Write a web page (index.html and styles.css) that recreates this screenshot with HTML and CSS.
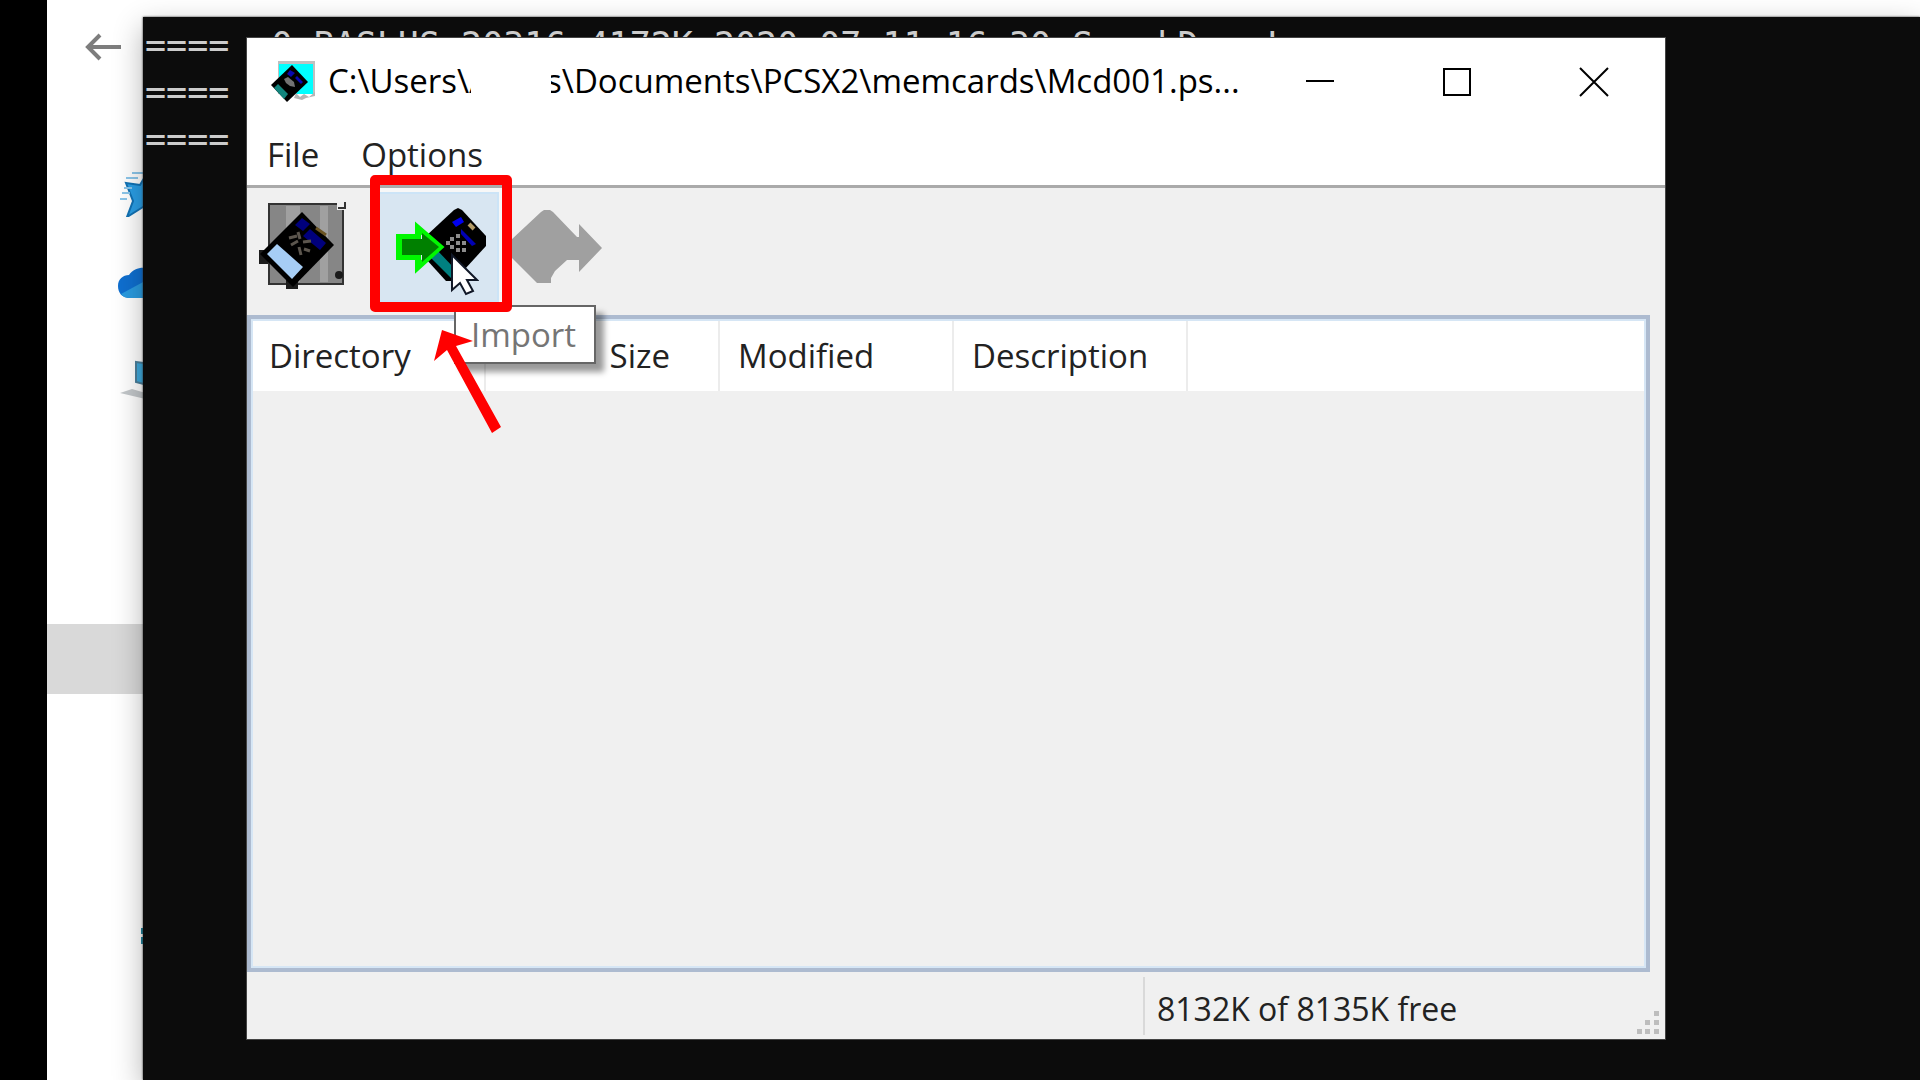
FILE: index.html
```
<!DOCTYPE html>
<html lang="en">
<head>
  <meta charset="UTF-8" />
  <meta name="viewport" content="width=device-width, initial-scale=1.0" />
  <title>Mcd001.ps2</title>
  <link rel="stylesheet" href="styles.css">
</head>
<body>
  <div class="explorer">
    <button type="button" class="back" aria-label="Back">
      <svg width="36" height="28" viewBox="0 0 36 28"><path d="M36 14H3M15 2L3 14l12 12" fill="none" stroke="#7d7d7d" stroke-width="4"/></svg>
    </button>
    <nav class="places">
      <a href="#" class="place" aria-label="Quick access">
        <svg width="48" height="48" viewBox="0 0 48 48">
          <path d="M8 14l14 2 6-10 5 12 13 2-10 9 3 14-14-5-16 10 6-16z" fill="#2b9fe6" stroke="#1272b4" stroke-width="2"/>
          <path d="M14 4h14M8 9h12M4 24h8M6 19h8M2 30h7" stroke="#8cc6ea" stroke-width="2"/>
        </svg>
      </a>
      <a href="#" class="place" aria-label="OneDrive">
        <svg width="52" height="32" viewBox="0 0 52 32">
          <path d="M12 31C4 31 0 26 0 19c0-7 5-11 11-11C15 2 22 0 28 1c9 1 12 8 13 12 7 0 11 5 11 9 0 6-4 9-9 9z" fill="#0f6fd0"/>
          <path d="M3 27L27 14l22 14c-1 2-4 3-6 3H12c-4 0-7-1-9-4z" fill="#2a9be0"/>
        </svg>
      </a>
      <a href="#" class="place" aria-label="This PC">
        <svg width="50" height="56" viewBox="0 0 50 56">
          <path d="M18 17l30 4v24l-30-8z" fill="#3fa9dc" stroke="#4c7f9a" stroke-width="2"/>
          <path d="M2 48l12-4 34 10-12 2z" fill="#c3c7ca"/>
        </svg>
      </a>
      <a href="#" class="place place-selected" aria-label="Selected folder"></a>
      <a href="#" class="place place-last" aria-label="Network">
        <svg width="24" height="16" viewBox="0 0 24 16"><path d="M0 0h24v6H0zM0 9h24v7H0z" fill="#1f87a3"/></svg>
      </a>
    </nav>
  </div>

  <pre class="console">====  0 BASLUS-20316 4172K 2020-07-11 16:30 SmackDown!
====
====</pre>

  <main class="window">
    <header class="titlebar">
      <svg class="app-icon" width="46" height="42" viewBox="0 0 46 42">
        <path d="M8 0h37v33H8z" fill="#c0c0c0"/>
        <path d="M9 3h34v30H9z" fill="#00ffff"/>
        <path d="M26 32l4 4 4-3 5 3 6-5v4l-9 2-4 2-8-2z" fill="#b5b5b5"/>
        <path d="M22 4l16 17-21 20L1 24z" fill="#000"/>
        <path d="M8 23l10 10-4 5L4 27z" fill="#12857d"/>
        <path d="M20 9l5 3-4 4-4-3zM27 15l6 6-2 2-6-6z" fill="#0808b0"/>
        <path d="M14 18l4-2 6 5 1 5-5-1-4-3z" fill="#727272"/>
      </svg>
      <h1 class="title">C:\Users\A<span class="redacted"></span>s\Documents\PCSX2\memcards\Mcd001.ps...</h1>
      <div class="window-buttons">
        <button type="button" aria-label="Minimize">
          <svg width="30" height="30" viewBox="0 0 30 30"><path d="M1 14h28" stroke="#000" stroke-width="2"/></svg>
        </button>
        <button type="button" aria-label="Maximize">
          <svg width="30" height="30" viewBox="0 0 30 30"><path d="M2 2h26v26H2z" fill="none" stroke="#000" stroke-width="2"/></svg>
        </button>
        <button type="button" aria-label="Close">
          <svg width="30" height="30" viewBox="0 0 30 30"><path d="M1 1l28 28M29 1L1 29" stroke="#000" stroke-width="2"/></svg>
        </button>
      </div>
    </header>

    <nav class="menubar">
      <button type="button">File</button>
      <button type="button">Options</button>
    </nav>

    <div class="toolbar">
      <button type="button" class="tool" aria-label="Open memory card">
        <svg width="90" height="90" viewBox="0 0 90 90">
          <path d="M12 2h74v80H12z" fill="#868686" stroke="#333" stroke-width="2"/>
          <path d="M29 4h14v76H29zM63 4h8v76h-8z" fill="#a0a0a0"/>
          <path d="M80 0h10v8H80z" fill="#efefef"/>
          <path d="M88 0v6h-7" fill="none" stroke="#333" stroke-width="2"/>
          <circle cx="82" cy="73" r="4" fill="#1a1a1a"/>
          <path d="M2 48h9v14H2zM29 74h12v13H29z" fill="#1c1c1c"/>
          <path d="M45 10l32 33-41 42L3 52z" fill="#000"/>
          <path d="M20 42l26 23-11 12-25-25z" fill="#a6cdf5"/>
          <path d="M45 16l8 6-7 7-8-6zM53 27l16 14-6 7-17-14z" fill="#00007c"/>
          <path d="M59 26l10 7" stroke="#6b5423" stroke-width="3"/>
          <path d="M32 36l8-2M41 30l2 7M46 40l8-1M34 43l7-4M42 45l2 8M47 47l6 2" stroke="#5c564e" stroke-width="3"/>
        </svg>
      </button>
      <button type="button" class="tool tool-active" aria-label="Import" aria-describedby="import-tip">
        <svg width="100" height="80" viewBox="0 0 100 80">
          <path d="M66 3l4-2 4 2 24 26v10L66 74h-8L38 52V29z" fill="#000"/>
          <path d="M48 42l19 20v9l-3 1-15-15-6-6z" fill="#008080"/>
          <path d="M64 15l9-5 3 5-8 5z" fill="#0000f0"/>
          <path d="M73 22l15 15-4 2-11-12z" fill="#0000b4"/>
          <path d="M81 17l5 5" stroke="#b29a66" stroke-width="4"/>
          <path d="M62 30h4v4h-4zM68 27h4v4h-4zM68 34h4v4h-4zM62 38h4v4h-4zM74 34h4v4h-4zM68 41h4v4h-4zM58 34h4v4h-4zM74 41h4v4h-4z" fill="#8c8c8c"/>
          <path d="M11 30h19V21l22 19-22 20V50H11z" fill="none" stroke="#00f800" stroke-width="6"/>
          <path d="M14 32h20v-6l17 14-17 15v-7H14z" fill="#008000"/>
        </svg>
      </button>
      <button type="button" class="tool" aria-label="Export" disabled>
        <svg width="92" height="76" viewBox="0 0 92 76">
          <path d="M31 3l3-2h6l3 2 24 25h2V15l23 24-23 24V51H57L45 62l-4 7v5H27L1 48V31z" fill="#a0a0a0"/>
        </svg>
      </button>
    </div>

    <section class="list">
      <table>
        <thead>
          <tr>
            <th>Directory</th>
            <th class="num">Size</th>
            <th>Modified</th>
            <th>Description</th>
            <th class="rest"></th>
          </tr>
        </thead>
      </table>
    </section>

    <footer class="statusbar">
      <span class="status-text">8132K of 8135K free</span>
      <svg width="22" height="24" viewBox="0 0 22 24"><path d="M17 0h5v5h-5zM8 9h5v5H8zM17 9h5v5h-5zM0 18h5v5H0zM8 18h5v5H8zM17 18h5v5h-5z" fill="#bdbdbd"/></svg>
    </footer>
  </main>

  <div class="tooltip" id="import-tip" role="tooltip">Import</div>
  <svg class="cursor" width="30" height="44" viewBox="0 0 30 44"><path d="M3 3v35l8-7 6 11 7-3-6-11h10z" fill="#fff" stroke="#111827" stroke-width="2"/></svg>
  <div class="highlight"></div>
  <svg class="pointer" width="70" height="104" viewBox="0 0 70 104"><path d="M9 0l31 11-17 5 45 81-9 6L14 20 1 31z" fill="#f00"/></svg>
</body>
</html>
```

FILE: styles.css
```
* {
  box-sizing: border-box;
}

body {
  margin: 0;
  height: 100vh;
  overflow: hidden;
  position: relative;
  background-color: #000;
  font-family: 'Open Sans', 'Noto Sans', sans-serif;
  font-size: 33px;
  color: #222;
}

button {
  border: none;
  background: none;
  padding: 0;
  font: inherit;
  color: inherit;
}

svg {
  display: block;
  flex: none;
}

/* file explorer behind everything */
.explorer {
  position: absolute;
  inset: 0 0 0 47px;
  background-color: #fff;
}

.back {
  display: flex;
  align-items: center;
  height: 94px;
  padding-left: 38px;
}

.places {
  display: flex;
  flex-direction: column;
  padding-top: 54px;
}

.place {
  display: flex;
  align-items: center;
  height: 90px;
  padding-left: 71px;
}

.place-selected {
  height: 70px;
  margin-top: 206px;
  background-color: #d9d9d9;
}

.place-last {
  margin-top: 197px;
  padding-left: 94px;
}

/* command prompt */
.console {
  position: absolute;
  inset: 17px 0 0 143px;
  margin: 0;
  padding: 5px 2px;
  overflow: hidden;
  background-color: #0c0c0c;
  box-shadow: 0 10px 28px rgba(0, 0, 0, 0.3), 0 0 2px #333;
  color: #ccc;
  font-family: 'DejaVu Sans Mono', monospace;
  font-size: 35px;
  line-height: 47px;
}

/* memory card window */
.window {
  position: absolute;
  inset: 38px 255px 41px 247px;
  display: flex;
  flex-direction: column;
  background-color: #f0f0f0;
  box-shadow: 0 0 0 1px #444;
}

.titlebar {
  display: flex;
  align-items: center;
  height: 88px;
  padding: 0 3px 0 23px;
  background-color: #fff;
}

.title {
  flex: 1;
  min-width: 0;
  margin: 0;
  padding-left: 12px;
  font-size: 33px;
  font-weight: 400;
  line-height: 44px;
  white-space: nowrap;
  color: #000;
}

/* blanks out the user name */
.redacted {
  display: inline-block;
  position: relative;
  width: 80px;
  height: 40px;
  margin: 0 -5px 0 -19px;
  vertical-align: middle;
  background-color: #fff;
}

.window-buttons {
  display: flex;
}

.window-buttons button {
  display: flex;
  align-items: center;
  justify-content: center;
  width: 137px;
  height: 88px;
}

.menubar {
  display: flex;
  gap: 42px;
  height: 62px;
  padding: 0 20px 2px;
  background-color: #fff;
  border-bottom: 3px solid #aaa;
}

.toolbar {
  display: flex;
  align-items: center;
  gap: 30px;
  height: 127px;
  padding: 0 0 9px 10px;
}

.tool {
  display: flex;
  align-items: center;
  justify-content: center;
  height: 110px;
}

.tool-active {
  width: 122px;
  margin-right: -19px;
  background-color: #d8e6f2;
  border: 2px solid #cce4f7;
  outline: 4px solid #f7f7f7;
}

.list {
  flex: 1;
  margin-right: 15px;
  border: 4px solid #adbbd0;
  outline: 2px solid #d6e6f5;
  outline-offset: -6px;
}

table {
  width: 100%;
  table-layout: fixed;
  border-collapse: collapse;
  background-color: #fff;
}

th {
  width: 234px;
  height: 72px;
  padding: 0 18px;
  border-right: 2px solid #ececec;
  font-weight: 400;
  text-align: left;
}

th.num {
  padding-right: 48px;
  text-align: right;
}

th.rest {
  width: auto;
  border-right: none;
}

.statusbar {
  display: flex;
  align-items: flex-end;
  justify-content: flex-end;
  height: 67px;
  padding: 0 6px 4px 0;
}

.status-text {
  flex: 0 0 494px;
  padding: 6px 0 0 12px;
  border-left: 2px solid #d9d9d9;
  font-size: 32px;
  line-height: 52px;
}

/* things lying over the window */
.tooltip {
  position: absolute;
  top: 305px;
  left: 454px;
  padding: 0 18px 0 15px;
  border: 2px solid #666;
  background-color: #fff;
  box-shadow: 8px 8px 6px rgba(0, 0, 0, 0.4);
  line-height: 55px;
  color: #757575;
}

.cursor {
  position: absolute;
  top: 252px;
  left: 449px;
}

.highlight {
  position: absolute;
  top: 175px;
  left: 370px;
  width: 142px;
  height: 137px;
  border: 10px solid #f00;
  border-radius: 5px;
}

.pointer {
  position: absolute;
  top: 330px;
  left: 433px;
}
```
